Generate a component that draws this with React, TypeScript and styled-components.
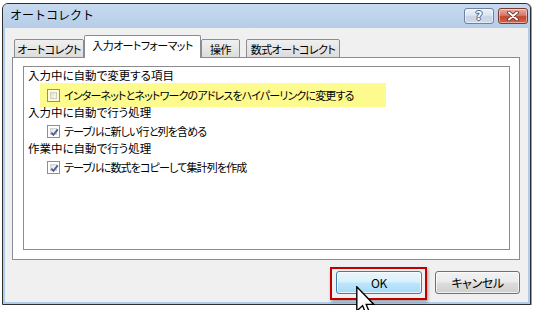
import * as React from 'react'
import styled, { createGlobalStyle } from 'styled-components'

const GlobalStyle = createGlobalStyle`
  html, body {
    margin: 0;
    padding: 0;
    background: #ffffff;
  }
  body {
    font-family: "Noto Sans CJK JP", "Noto Sans", sans-serif;
    font-size: 12px;
    color: #000;
  }
`

const uiFont = `"Noto Sans CJK JP", "Noto Sans", sans-serif`

const Screen = styled.div`
  position: relative;
  width: 536px;
  height: 310px;
  overflow: hidden;
  padding: 3px 0 0 2px;
  box-sizing: border-box;
`

const Window = styled.div`
  width: 529px;
  height: 302px;
  box-sizing: border-box;
  border: 1px solid #2f2f2f;
  border-radius: 6px 6px 0 0;
  background: #aecdec;
  padding: 0 2px 2px 2px;
  display: flex;
  flex-direction: column;
  box-shadow: 1px 0 0 #9a9a9a;
`

const TitleBar = styled.div`
  height: 24px;
  flex: none;
  display: flex;
  align-items: flex-start;
  padding: 4px 2px 0 7px;
  margin: 0 -2px;
  border-radius: 5px 5px 0 0;
  background: linear-gradient(#c7daef, #b6cde8);
  box-sizing: border-box;
`

const TitleText = styled.div`
  flex: 1;
  margin-top: -4px;
  line-height: 22px;
  font-family: ${uiFont};
  font-size: 12px;
  color: #000;
`

const CaptionButton = styled.div<{ $close?: boolean }>`
  width: 30px;
  height: 16px;
  box-sizing: border-box;
  border: 1px solid ${p => (p.$close ? '#7d3a2e' : '#6f829a')};
  border-radius: 3px;
  margin-left: ${p => (p.$close ? '4px' : '0')};
  background: ${p =>
    p.$close
      ? 'linear-gradient(#e8ada2 0%, #d57a68 45%, #c4452e 55%, #d3644d 100%)'
      : 'linear-gradient(#eef3f9 0%, #dbe5f1 45%, #c6d5e7 55%, #cddbeb 100%)'};
  box-shadow: inset 0 0 0 1px rgba(255, 255, 255, 0.45);
  display: flex;
  align-items: center;
  justify-content: center;
`

const HelpGlyph = styled.span`
  font-family: "DejaVu Sans", sans-serif;
  font-weight: bold;
  font-size: 12px;
  line-height: 12px;
  color: #ffffff;
  text-shadow: 0 0 1px #3a4a60, 1px 0 0 #5a6a80, -1px 0 0 #5a6a80, 0 1px 0 #5a6a80, 0 -1px 0 #5a6a80;
`

const Body = styled.div`
  flex: 1;
  background: #f0f0f0;
  padding: 7px 8px 0 7px;
  display: flex;
  flex-direction: column;
`

const TabBar = styled.div`
  height: 23px;
  display: flex;
  align-items: flex-end;
  padding-left: 2px;
  margin-bottom: -1px;
  position: relative;
  z-index: 1;
`

const Tab = styled.div<{ $active?: boolean; $width: number; $gap?: number }>`
  width: ${p => p.$width}px;
  height: ${p => (p.$active ? 23 : 19)}px;
  margin-left: ${p => p.$gap ?? 0}px;
  box-sizing: border-box;
  border: 1px solid #898c95;
  border-bottom: ${p => (p.$active ? 'none' : '1px solid #898c95')};
  border-radius: 2px 2px 0 0;
  background: ${p => (p.$active ? '#ffffff' : 'linear-gradient(#f0f0f0, #dcdcdc)')};
  display: flex;
  align-items: center;
  justify-content: center;
  padding-bottom: ${p => (p.$active ? 4 : 0)}px;
  font-family: ${uiFont};
  font-size: 11px;
  letter-spacing: -0.6px;
  font-feature-settings: "palt";
  white-space: nowrap;
`

const Panel = styled.div`
  width: 508px;
  height: 203px;
  box-sizing: border-box;
  border: 1px solid #898c95;
  background: #ffffff;
  padding: 8px 9px 9px 10px;
  display: flex;
`

const GroupBox = styled.div`
  flex: 1;
  border: 1px solid #8c8c8c;
  padding: 0 0 0 4px;
  display: flex;
  flex-direction: column;
  align-items: flex-start;
`

const SectionLabel = styled.div<{ $shift?: number }>`
  height: 16px;
  line-height: 16px;
  margin-top: ${p => p.$shift ?? 0}px;
  font-family: ${uiFont};
  font-size: 11.5px;
  font-feature-settings: "palt";
  white-space: nowrap;
  position: relative;
`

const OptionRow = styled.div<{ $highlight?: boolean; $shift?: number }>`
  display: flex;
  align-items: center;
  gap: 3px;
  height: ${p => (p.$highlight ? 24 : 20)}px;
  width: ${p => (p.$highlight ? '346px' : 'auto')};
  box-sizing: border-box;
  margin-left: ${p => (p.$highlight ? 12 : 19)}px;
  margin-top: ${p => p.$shift ?? 0}px;
  padding-left: ${p => (p.$highlight ? 7 : 0)}px;
  background: ${p => (p.$highlight ? '#fdfb8e' : 'transparent')};
  font-family: ${uiFont};
  font-size: 11px;
  letter-spacing: -0.85px;
  font-feature-settings: "palt";
  white-space: nowrap;
`

const CheckBox = styled.div`
  width: 13px;
  height: 13px;
  flex: none;
  margin-right: 1px;
  box-sizing: border-box;
  border: 1px solid #8e8f8f;
  background: rgba(255, 255, 255, 0.6);
  padding: 2px;
  display: flex;
`

const CheckInner = styled.div`
  flex: 1;
  border: 1px solid rgba(120, 120, 120, 0.25);
  background: linear-gradient(135deg, rgba(200, 200, 200, 0.55), rgba(250, 250, 250, 0.5));
  position: relative;
`

const CheckMark = styled.svg`
  position: absolute;
  left: -2px;
  top: -2px;
`

const ButtonRow = styled.div`
  display: flex;
  justify-content: flex-end;
  align-items: flex-start;
  padding-top: 11px;
  gap: 8px;
`

const Annotation = styled.div`
  margin-top: -4px;
  padding: 2px 3px 4px 4px;
  border: 2px solid #c00000;
  box-shadow: 1px 2px 3px rgba(0, 0, 0, 0.35);
`

const PushButton = styled.div<{ $hot?: boolean; $width: number }>`
  width: ${p => p.$width}px;
  height: 23px;
  box-sizing: border-box;
  border: 1px solid ${p => (p.$hot ? '#3c7fb1' : '#707070')};
  border-radius: 3px;
  background: ${p =>
    p.$hot
      ? 'linear-gradient(#eaf6fd 0%, #d9f0fc 48%, #bee6fd 52%, #a7d9f5 100%)'
      : 'linear-gradient(#f2f2f2 0%, #ebebeb 48%, #dddddd 52%, #cfcfcf 100%)'};
  box-shadow: inset 0 0 0 1px rgba(255, 255, 255, 0.7);
  display: flex;
  align-items: center;
  justify-content: center;
  font-family: ${uiFont};
  font-size: 12px;
  letter-spacing: -0.4px;
  font-feature-settings: "palt";
  color: #000;
`

const Cursor = styled.svg`
  position: absolute;
  left: 356px;
  top: 286px;
`

function Check({ checked }: { checked?: boolean }) {
  return (
    <CheckBox>
      <CheckInner>
        {checked && (
          <CheckMark width="11" height="11" viewBox="0 0 11 11">
            <path d="M2.3 5.6 L4.4 7.8 L8.8 2.4" fill="none" stroke="#4a5f97" strokeWidth="1.8" />
          </CheckMark>
        )}
      </CheckInner>
    </CheckBox>
  )
}

export default function App() {
  return (
    <>
      <GlobalStyle />
      <Screen>
        <Window>
          <TitleBar>
            <TitleText>オートコレクト</TitleText>
            <CaptionButton>
              <HelpGlyph>?</HelpGlyph>
            </CaptionButton>
            <CaptionButton $close>
              <svg width="14" height="10" viewBox="0 0 14 10">
                <path d="M3 1.5 L11 8.5 M11 1.5 L3 8.5" stroke="#5a2a22" strokeWidth="3.6" strokeLinecap="round" />
                <path d="M3 1.5 L11 8.5 M11 1.5 L3 8.5" stroke="#ffffff" strokeWidth="2" strokeLinecap="round" />
              </svg>
            </CaptionButton>
          </TitleBar>
          <Body>
            <TabBar>
              <Tab $width={70}>オートコレクト</Tab>
              <Tab $width={117} $active>
                入力オートフォーマット
              </Tab>
              <Tab $width={39}>操作</Tab>
              <Tab $width={94} $gap={6}>
                数式オートコレクト
              </Tab>
            </TabBar>
            <Panel>
              <GroupBox>
                <SectionLabel>入力中に自動で変更する項目</SectionLabel>
                <OptionRow $highlight>
                  <Check />
                  インターネットとネットワークのアドレスをハイパーリンクに変更する
                </OptionRow>
                <SectionLabel $shift={-3}>入力中に自動で行う処理</SectionLabel>
                <OptionRow $shift={1}>
                  <Check checked />
                  テーブルに新しい行と列を含める
                </OptionRow>
                <SectionLabel $shift={-1}>作業中に自動で行う処理</SectionLabel>
                <OptionRow $shift={1}>
                  <Check checked />
                  テーブルに数式をコピーして集計列を作成
                </OptionRow>
              </GroupBox>
            </Panel>
            <ButtonRow>
              <Annotation>
                <PushButton $hot $width={86}>
                  OK
                </PushButton>
              </Annotation>
              <PushButton $width={85}>キャンセル</PushButton>
            </ButtonRow>
          </Body>
        </Window>
        <Cursor width="20" height="32" viewBox="0 0 20 32">
          <path
            d="M0.8 0.8 L0.8 25 L6.6 19.6 L10.6 29.6 L14.2 28 L10.2 18.4 L17.8 18.4 Z"
            fill="#ffffff"
            stroke="#000000"
            strokeWidth="1.4"
            strokeLinejoin="miter"
          />
        </Cursor>
      </Screen>
    </>
  )
}
